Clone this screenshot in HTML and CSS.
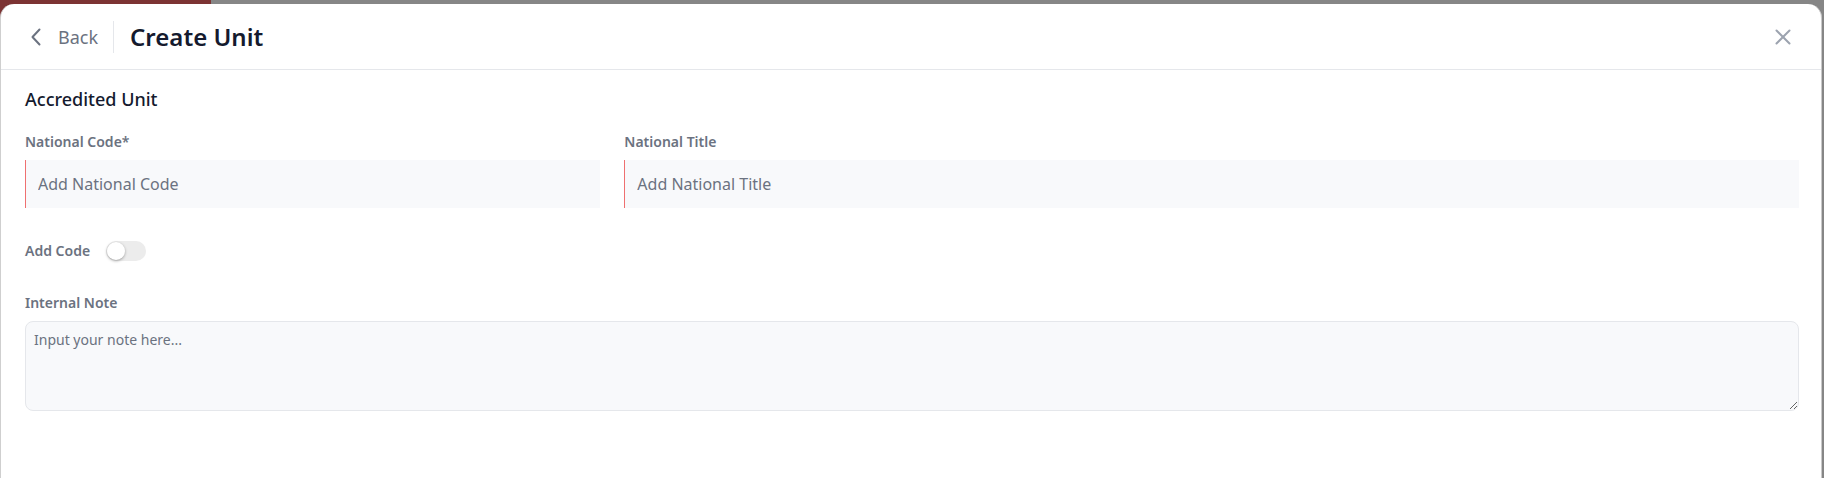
FILE: index.html
```html
<!DOCTYPE html>
<html lang="en">
<head>
<meta charset="utf-8">
<title>Create Unit</title>
<link rel="stylesheet" href="styles.css">
</head>
<body>
<div class="panel">
  <header class="header">
    <button class="back" type="button">
      <svg class="chev" width="12" height="18" viewBox="0 0 12 18" fill="none"><path d="M9.5 1.5 L2.5 9 L9.5 16.5" stroke="#6b7280" stroke-width="2" stroke-linecap="round" stroke-linejoin="round"/></svg>
      <span>Back</span>
    </button>
    <span class="divider"></span>
    <h1 class="title">Create Unit</h1>
    <button class="close" type="button" aria-label="Close">
      <svg width="16" height="16" viewBox="0 0 16 16" fill="none"><path d="M1.5 1.5 L14.5 14.5 M14.5 1.5 L1.5 14.5" stroke="#9ca3af" stroke-width="2" stroke-linecap="round"/></svg>
    </button>
  </header>
  <main class="content">
    <h2 class="section-title">Accredited Unit</h2>
    <div class="grid">
      <div class="field">
        <label class="label">National Code*</label>
        <input class="input" type="text" placeholder="Add National Code">
      </div>
      <div class="field span2">
        <label class="label">National Title</label>
        <input class="input" type="text" placeholder="Add National Title">
      </div>
    </div>
    <div class="toggle-row">
      <span class="label">Add Code</span>
      <span class="switch"><span class="knob"></span></span>
    </div>
    <div class="field note">
      <label class="label">Internal Note</label>
      <textarea class="textarea" placeholder="Input your note here..."></textarea>
    </div>
  </main>
</div>
</body>
</html>
```

FILE: styles.css
```css
* { box-sizing: border-box; }
html, body { height: 100%; }
body {
  margin: 0;
  font-family: "Noto Sans", "Open Sans", sans-serif;
  background: linear-gradient(to right, #7c3333 0, #7c3333 211px, #868686 211px);
  overflow: hidden;
}
.panel {
  margin-top: 4px;
  width: 1822px;
  height: 474px;
  background: #ffffff;
  border-left: 1px solid #cfcfcf;
  border-right: 1px solid #c9c9c9;
  border-radius: 14px 14px 0 0;
}
.header {
  height: 66px;
  border-bottom: 1px solid #e5e7eb;
  display: flex;
  align-items: center;
  padding: 0 30px 0 29px;
}
.back {
  display: flex;
  align-items: center;
  gap: 16px;
  background: none;
  border: 0;
  padding: 0;
  font-family: inherit;
  font-size: 18px;
  color: #6b7280;
  cursor: pointer;
}
.chev { display: block; }
.divider {
  width: 1px;
  height: 32px;
  background: #e5e7eb;
  margin: 0 16px 0 15px;
}
.title {
  margin: 0;
  font-size: 24px;
  font-weight: 600;
  color: #141a2e;
  flex: 1;
}
.close {
  background: none;
  border: 0;
  padding: 0;
  display: flex;
  cursor: pointer;
}
.content {
  padding: 17px 22px 0 24px;
}
.section-title {
  margin: 0 0 21px;
  font-size: 18px;
  line-height: 24px;
  font-weight: 500;
  color: #141a2e;
}
.grid {
  display: grid;
  grid-template-columns: repeat(3, 1fr);
  gap: 24px;
}
.span2 { grid-column: span 2; }
.field {
  display: flex;
  flex-direction: column;
  gap: 8px;
}
.label {
  font-size: 14px;
  line-height: 20px;
  font-weight: 600;
  color: #6b7280;
}
.input {
  height: 48px;
  border: 0;
  border-left: 1px solid #ef7070;
  background: #f8f9fb;
  padding: 0 12px;
  font-family: inherit;
  font-size: 16px;
  color: #111827;
  outline: none;
}
.input::placeholder, .textarea::placeholder { color: #6b7280; opacity: 1; }
.toggle-row {
  display: flex;
  align-items: center;
  gap: 16px;
  margin-top: 32px;
  height: 21px;
}
.switch {
  width: 40px;
  height: 20px;
  border-radius: 10px;
  background: #ececec;
  display: flex;
  align-items: center;
  padding: 0 1px;
}
.knob {
  width: 18px;
  height: 18px;
  border-radius: 50%;
  background: #ffffff;
  box-shadow: 0 1px 3px rgba(0, 0, 0, 0.35);
}
.note { margin-top: 32px; }
.textarea {
  height: 90px;
  border: 1px solid #e5e7eb;
  border-radius: 8px;
  background: #f8f9fb;
  padding: 8px 8px;
  font-family: inherit;
  font-size: 14px;
  line-height: 20px;
  color: #111827;
  outline: none;
}
```
